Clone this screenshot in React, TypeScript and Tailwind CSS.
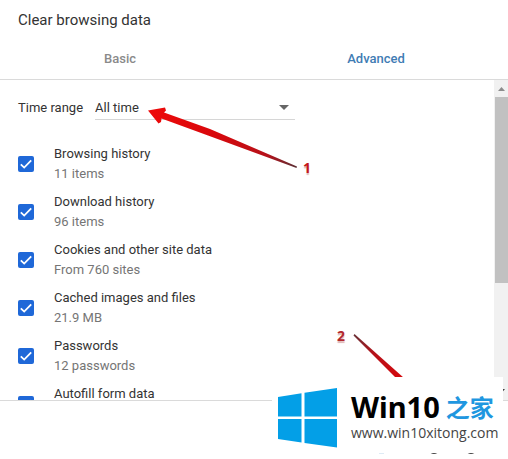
import { useState } from "react";

const items = [
    { id: "history", title: "Browsing history", detail: "11 items" },
    { id: "downloads", title: "Download history", detail: "96 items" },
    { id: "cookies", title: "Cookies and other site data", detail: "From 760 sites" },
    { id: "cache", title: "Cached images and files", detail: "21.9 MB" },
    { id: "passwords", title: "Passwords", detail: "12 passwords" },
    { id: "autofill", title: "Autofill form data", detail: "" },
];

function Item({ id, title, detail }: { id: string; title: string; detail: string }) {
    const [checked, setChecked] = useState(true);

    return (
        <li className="flex h-12 items-center gap-5">
            <span className="relative flex size-4 shrink-0">
                <input
                    id={id}
                    type="checkbox"
                    checked={checked}
                    onChange={() => setChecked(!checked)}
                    className="size-4 appearance-none rounded-xs border-2 border-[#5f6368] checked:border-0 checked:bg-[#1f68d8]"
                />
                {checked && (
                    <svg viewBox="0 0 16 16" className="pointer-events-none absolute inset-0 size-4" fill="none" stroke="#fff" strokeWidth="1.8">
                        <path d="M2.8 8.3 6.2 11.6 13.2 4.4" />
                    </svg>
                )}
            </span>
            <label htmlFor={id} className="flex h-10 flex-col text-[13px] leading-5 text-[#333]">
                {title}
                <span className="text-[#757575]">{detail}</span>
            </label>
        </li>
    );
}

function Scrollbar() {
    return (
        <div className="flex w-[14px] shrink-0 flex-col items-center border-l border-[#f1f1f1] bg-[#f1f1f1]">
            <svg viewBox="0 0 13 17" className="h-[17px] w-[13px] shrink-0" fill="#8c8c8c">
                <path d="M3 11 6.5 7 10 11z" />
            </svg>
            <div className="h-[186px] w-full bg-[#c1c1c1]" />
            <div className="flex-1" />
            <svg viewBox="0 0 13 17" className="h-[17px] w-[13px] shrink-0" fill="#404040">
                <path d="M3 6 10 6 6.5 10z" />
            </svg>
        </div>
    );
}

function Arrows() {
    return (
        <svg viewBox="0 0 508 459" className="pointer-events-none absolute top-0 left-0 h-[459px] w-[508px]">
            <defs>
                <linearGradient id="first" x1="148" y1="110" x2="297" y2="167" gradientUnits="userSpaceOnUse">
                    <stop offset="0" stopColor="#ee0a0a" />
                    <stop offset="0.45" stopColor="#d8080c" />
                    <stop offset="0.8" stopColor="#b5121a" />
                    <stop offset="1" stopColor="#5a3035" />
                </linearGradient>
                <linearGradient id="second" x1="404" y1="380" x2="354" y2="335" gradientUnits="userSpaceOnUse">
                    <stop offset="0" stopColor="#d8080c" />
                    <stop offset="0.6" stopColor="#b5121a" />
                    <stop offset="1" stopColor="#6a3035" />
                </linearGradient>
            </defs>
            <path d="M148 110.5 165 107.5 166 110.5 164 112.5 210 129 297 166.5 296.5 168 208 135.5 161.5 118.5 161 122 158.5 123.5z" fill="url(#first)" />
            <path d="M354.5 334 404 378 396 378 353.5 335.500z" fill="url(#second)" />
        </svg>
    );
}

function Watermark() {
    return (
        <div className="absolute right-[5px] bottom-[6px] flex w-[231px] items-start gap-[14px] bg-white pt-[10px] pl-[6px]">
            <svg viewBox="0 0 59 60" className="mt-px h-[60px] w-[59px] shrink-0" fill="#039fe7">
                <path d="M0 9 23.5 5.3V28.5H0z" />
                <path d="M26.5 4.8 59 0V28.5H26.5z" />
                <path d="M0 31H23.5V54.5L0 51z" />
                <path d="M26.5 31H59V59.5L26.5 55z" />
            </svg>
            <div className="flex h-[66px] flex-col whitespace-nowrap">
                <div className="flex h-9 items-center gap-[6px] pt-1 leading-9">
                    <span className="font-['Noto_Sans',sans-serif] text-[29px] font-bold text-black">Win10</span>
                    <span className="font-['Noto_Sans_CJK_SC',sans-serif] text-[24px] font-bold text-[#1f97e0]">之家</span>
                </div>
                <span className="font-['Open_Sans',sans-serif] text-[14px] leading-5 text-[#444]">www.win10xitong.com</span>
            </div>
        </div>
    );
}

export default function App() {
    return (
        <div className="relative flex h-screen flex-col overflow-hidden bg-white font-[Roboto,sans-serif] text-[13px] text-[#333]">
            <header className="border-b border-[#dadada]">
                <h1 className="px-[18px] pt-2 text-[15px] leading-6">Clear browsing data</h1>
                <nav className="mt-[6px] mr-1 -ml-2 flex h-[41px] items-center font-medium">
                    <button type="button" className="flex-1 text-[#8a8a8a]">Basic</button>
                    <button type="button" className="flex-1 text-[#3f7cb4]">Advanced</button>
                </nav>
            </header>

            <main className="flex min-h-0 flex-1">
                <div className="min-w-0 flex-1 overflow-hidden px-[18px] pt-4">
                    <div className="mb-5 flex h-6 items-center gap-3">
                        <label htmlFor="range">Time range</label>
                        <div className="relative flex h-6 w-[200px] items-center border-b border-[#d6d6d6]">
                            <select id="range" className="w-full appearance-none bg-transparent outline-none">
                                <option>All time</option>
                            </select>
                            <svg viewBox="0 0 10 5" className="pointer-events-none absolute right-[6px] h-[5px] w-[10px]" fill="#666">
                                <path d="M0 0H10L5 5z" />
                            </svg>
                        </div>
                    </div>
                    <ul>
                        {items.map((item) => (
                            <Item key={item.id} {...item} />
                        ))}
                    </ul>
                </div>
                <Scrollbar />
            </main>

            <footer className="flex h-[59px] shrink-0 items-end justify-end border-t border-[#dadada] pr-[33px] pb-1">
                <svg viewBox="0 0 98 3" className="h-[3px] w-[98px]" fill="none" strokeWidth="1.2">
                    <path d="M2 0.600H7" stroke="#5a9ccb" />
                    <path d="M54 0.500Q57 2.500 60 0.500" stroke="#444" />
                    <path d="M91 0.500Q94 2.500 97 0.500" stroke="#444" />
                </svg>
            </footer>

            <Arrows />
            <span className="absolute top-[158px] left-[303px] font-['Noto_Sans',sans-serif] text-[14px] leading-5 font-bold text-[#c4161c] text-shadow-[0_2px_1px_#ddb5b5]">1</span>
            <span className="absolute top-[326px] left-[337px] font-['Noto_Sans',sans-serif] text-[14px] leading-5 font-bold text-[#b3282d] text-shadow-[0_2px_1px_#ddb5b5]">2</span>
            <Watermark />
        </div>
    );
}
